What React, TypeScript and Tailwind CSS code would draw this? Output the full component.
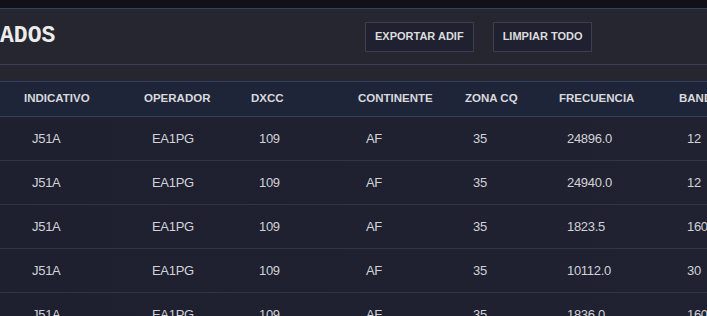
const rows = [
  { call: 'J51A', op: 'EA1PG', dxcc: '109', cont: 'AF', cq: '35', freq: '24896.0', band: '12' },
  { call: 'J51A', op: 'EA1PG', dxcc: '109', cont: 'AF', cq: '35', freq: '24940.0', band: '12' },
  { call: 'J51A', op: 'EA1PG', dxcc: '109', cont: 'AF', cq: '35', freq: '1823.5', band: '160' },
  { call: 'J51A', op: 'EA1PG', dxcc: '109', cont: 'AF', cq: '35', freq: '10112.0', band: '30' },
  { call: 'J51A', op: 'EA1PG', dxcc: '109', cont: 'AF', cq: '35', freq: '1836.0', band: '160' },
];

const headers = ['INDICATIVO', 'OPERADOR', 'DXCC', 'CONTINENTE', 'ZONA CQ', 'FRECUENCIA', 'BANDA'];
const widths = ['w-[120px]', 'w-[107px]', 'w-[107px]', 'w-[107px]', 'w-[94px]', 'w-[120px]', 'w-[120px]'];

export default function App() {
  return (
    <div className="w-[707px] h-[316px] overflow-hidden bg-[#111117]">
      <div className="h-2" />
      <section className="border-t border-[#34425e] bg-[#252630]">
        <div className="flex items-center h-[56px] border-b border-[#3a4058]">
          <div className="w-[365px] overflow-hidden shrink-0">
            <h2 className="ml-[-138px] whitespace-nowrap text-[23px] font-bold text-[#ececec] font-['Liberation_Mono',monospace] leading-none">
              QSOS GUARDADOS
            </h2>
          </div>
          <div className="flex gap-[19px] font-['Liberation_Sans',sans-serif]">
            <button className="h-[30px] px-[9px] border border-[#3c3f4c] bg-[#1f2130] text-[11px] font-bold text-[#dcdcdc]">
              EXPORTAR ADIF
            </button>
            <button className="h-[30px] px-[9px] border border-[#3c3f4c] bg-[#1f2130] text-[11px] font-bold text-[#dcdcdc]">
              LIMPIAR TODO
            </button>
          </div>
        </div>
        <div className="h-4" />
        <table className="table-fixed border-collapse w-[775px] font-['Liberation_Sans',sans-serif]">
          <thead>
            <tr className="h-[35px] bg-[#1f2539] border-t border-b border-[#34425e]">
              {headers.map((h, i) => (
                <th key={h} className={`${widths[i]} pl-6 text-left text-[11.5px] font-bold text-[#d9d9dc] whitespace-nowrap`}>
                  {h}
                </th>
              ))}
            </tr>
          </thead>
          <tbody className="bg-gradient-to-r from-[#1e2030] to-[#202232]">
            {rows.map((r, i) => (
              <tr key={i} className="h-[44px] border-b border-[#30364a] text-[13px] text-[#d2d2d6]">
                <td className="pl-8 tracking-[-0.3px]">{r.call}</td>
                <td className="pl-8 tracking-[-0.3px]">{r.op}</td>
                <td className="pl-8 tracking-[-0.3px]">{r.dxcc}</td>
                <td className="pl-8 tracking-[-0.3px]">{r.cont}</td>
                <td className="pl-8 tracking-[-0.3px]">{r.cq}</td>
                <td className="pl-8 tracking-[-0.3px]">{r.freq}</td>
                <td className="pl-8 tracking-[-0.3px]">{r.band}</td>
              </tr>
            ))}
          </tbody>
        </table>
      </section>
    </div>
  );
}
